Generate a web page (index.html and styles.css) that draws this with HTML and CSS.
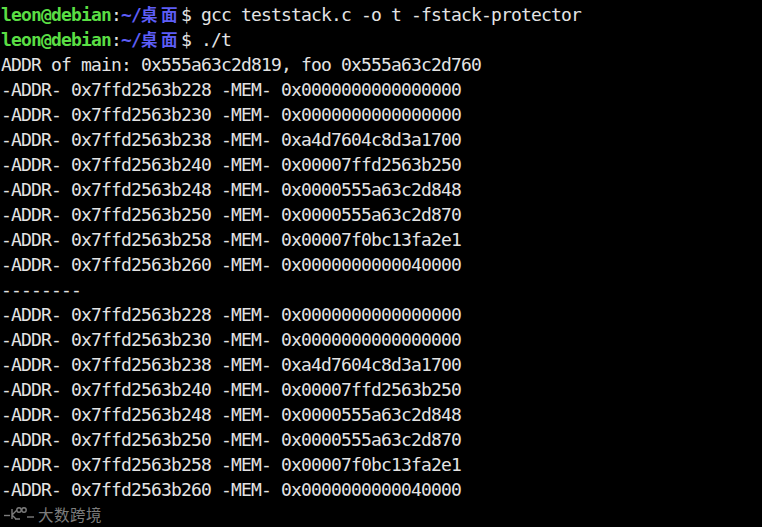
FILE: index.html
```html
<!DOCTYPE html>
<html>
<head>
<meta charset="utf-8">
<link rel="stylesheet" href="styles.css">
</head>
<body>
<pre class="term"><span class="user">leon@debian</span>:<span class="path">~/<span class="cjk">桌面</span></span>$ gcc teststack.c -o t -fstack-protector
<span class="user">leon@debian</span>:<span class="path">~/<span class="cjk">桌面</span></span>$ ./t
ADDR of main: 0x555a63c2d819, foo 0x555a63c2d760
-ADDR- 0x7ffd2563b228 -MEM- 0x0000000000000000
-ADDR- 0x7ffd2563b230 -MEM- 0x0000000000000000
-ADDR- 0x7ffd2563b238 -MEM- 0xa4d7604c8d3a1700
-ADDR- 0x7ffd2563b240 -MEM- 0x00007ffd2563b250
-ADDR- 0x7ffd2563b248 -MEM- 0x0000555a63c2d848
-ADDR- 0x7ffd2563b250 -MEM- 0x0000555a63c2d870
-ADDR- 0x7ffd2563b258 -MEM- 0x00007f0bc13fa2e1
-ADDR- 0x7ffd2563b260 -MEM- 0x0000000000040000
--------
-ADDR- 0x7ffd2563b228 -MEM- 0x0000000000000000
-ADDR- 0x7ffd2563b230 -MEM- 0x0000000000000000
-ADDR- 0x7ffd2563b238 -MEM- 0xa4d7604c8d3a1700
-ADDR- 0x7ffd2563b240 -MEM- 0x00007ffd2563b250
-ADDR- 0x7ffd2563b248 -MEM- 0x0000555a63c2d848
-ADDR- 0x7ffd2563b250 -MEM- 0x0000555a63c2d870
-ADDR- 0x7ffd2563b258 -MEM- 0x00007f0bc13fa2e1
-ADDR- 0x7ffd2563b260 -MEM- 0x0000000000040000</pre>
<div class="watermark">
<svg class="wm-logo" width="32" height="16" viewBox="0 0 32 16" fill="none" stroke="currentColor" stroke-width="1.4">
<path d="M1 9.5 H7"/>
<path d="M9 3 V13 M9 9 L14 4 M9 9 L13 13 M12 13 H17"/>
<circle cx="16" cy="4" r="2.2"/>
<circle cx="21" cy="4" r="2.2"/>
<path d="M24 11 H31"/>
</svg>
<span class="wm-text">大数跨境</span>
</div>
</body>
</html>
```
FILE: styles.css
```css
html, body {
  margin: 0;
  padding: 0;
  background: #000;
  width: 762px;
  height: 527px;
  overflow: hidden;
}
body {
  position: relative;
}
.term {
  margin: 0;
  padding: 2px 0 0 1px;
  font-family: "DejaVu Sans Mono", "Liberation Mono", monospace;
  font-size: 18px;
  letter-spacing: -0.836px;
  line-height: 25px;
  color: #e4e4e4;
  white-space: pre;
}
.user {
  color: #5ade44;
  font-weight: bold;
}
.path {
  color: #5d5df5;
  font-weight: bold;
}
.cjk {
  letter-spacing: 3.5px;
  font-family: "Noto Sans CJK SC", sans-serif;
  font-weight: bold;
  font-size: 16.5px;
  line-height: 20px;
}
.watermark {
  position: absolute;
  left: 3px;
  top: 505px;
  display: flex;
  align-items: center;
  gap: 3px;
  color: #8a8a8a;
  opacity: 0.9;
}
.wm-logo {
  display: block;
}
.wm-text {
  font-family: "Noto Sans CJK SC", sans-serif;
  font-size: 15.5px;
  line-height: 18px;
  letter-spacing: 0.5px;
}
```
